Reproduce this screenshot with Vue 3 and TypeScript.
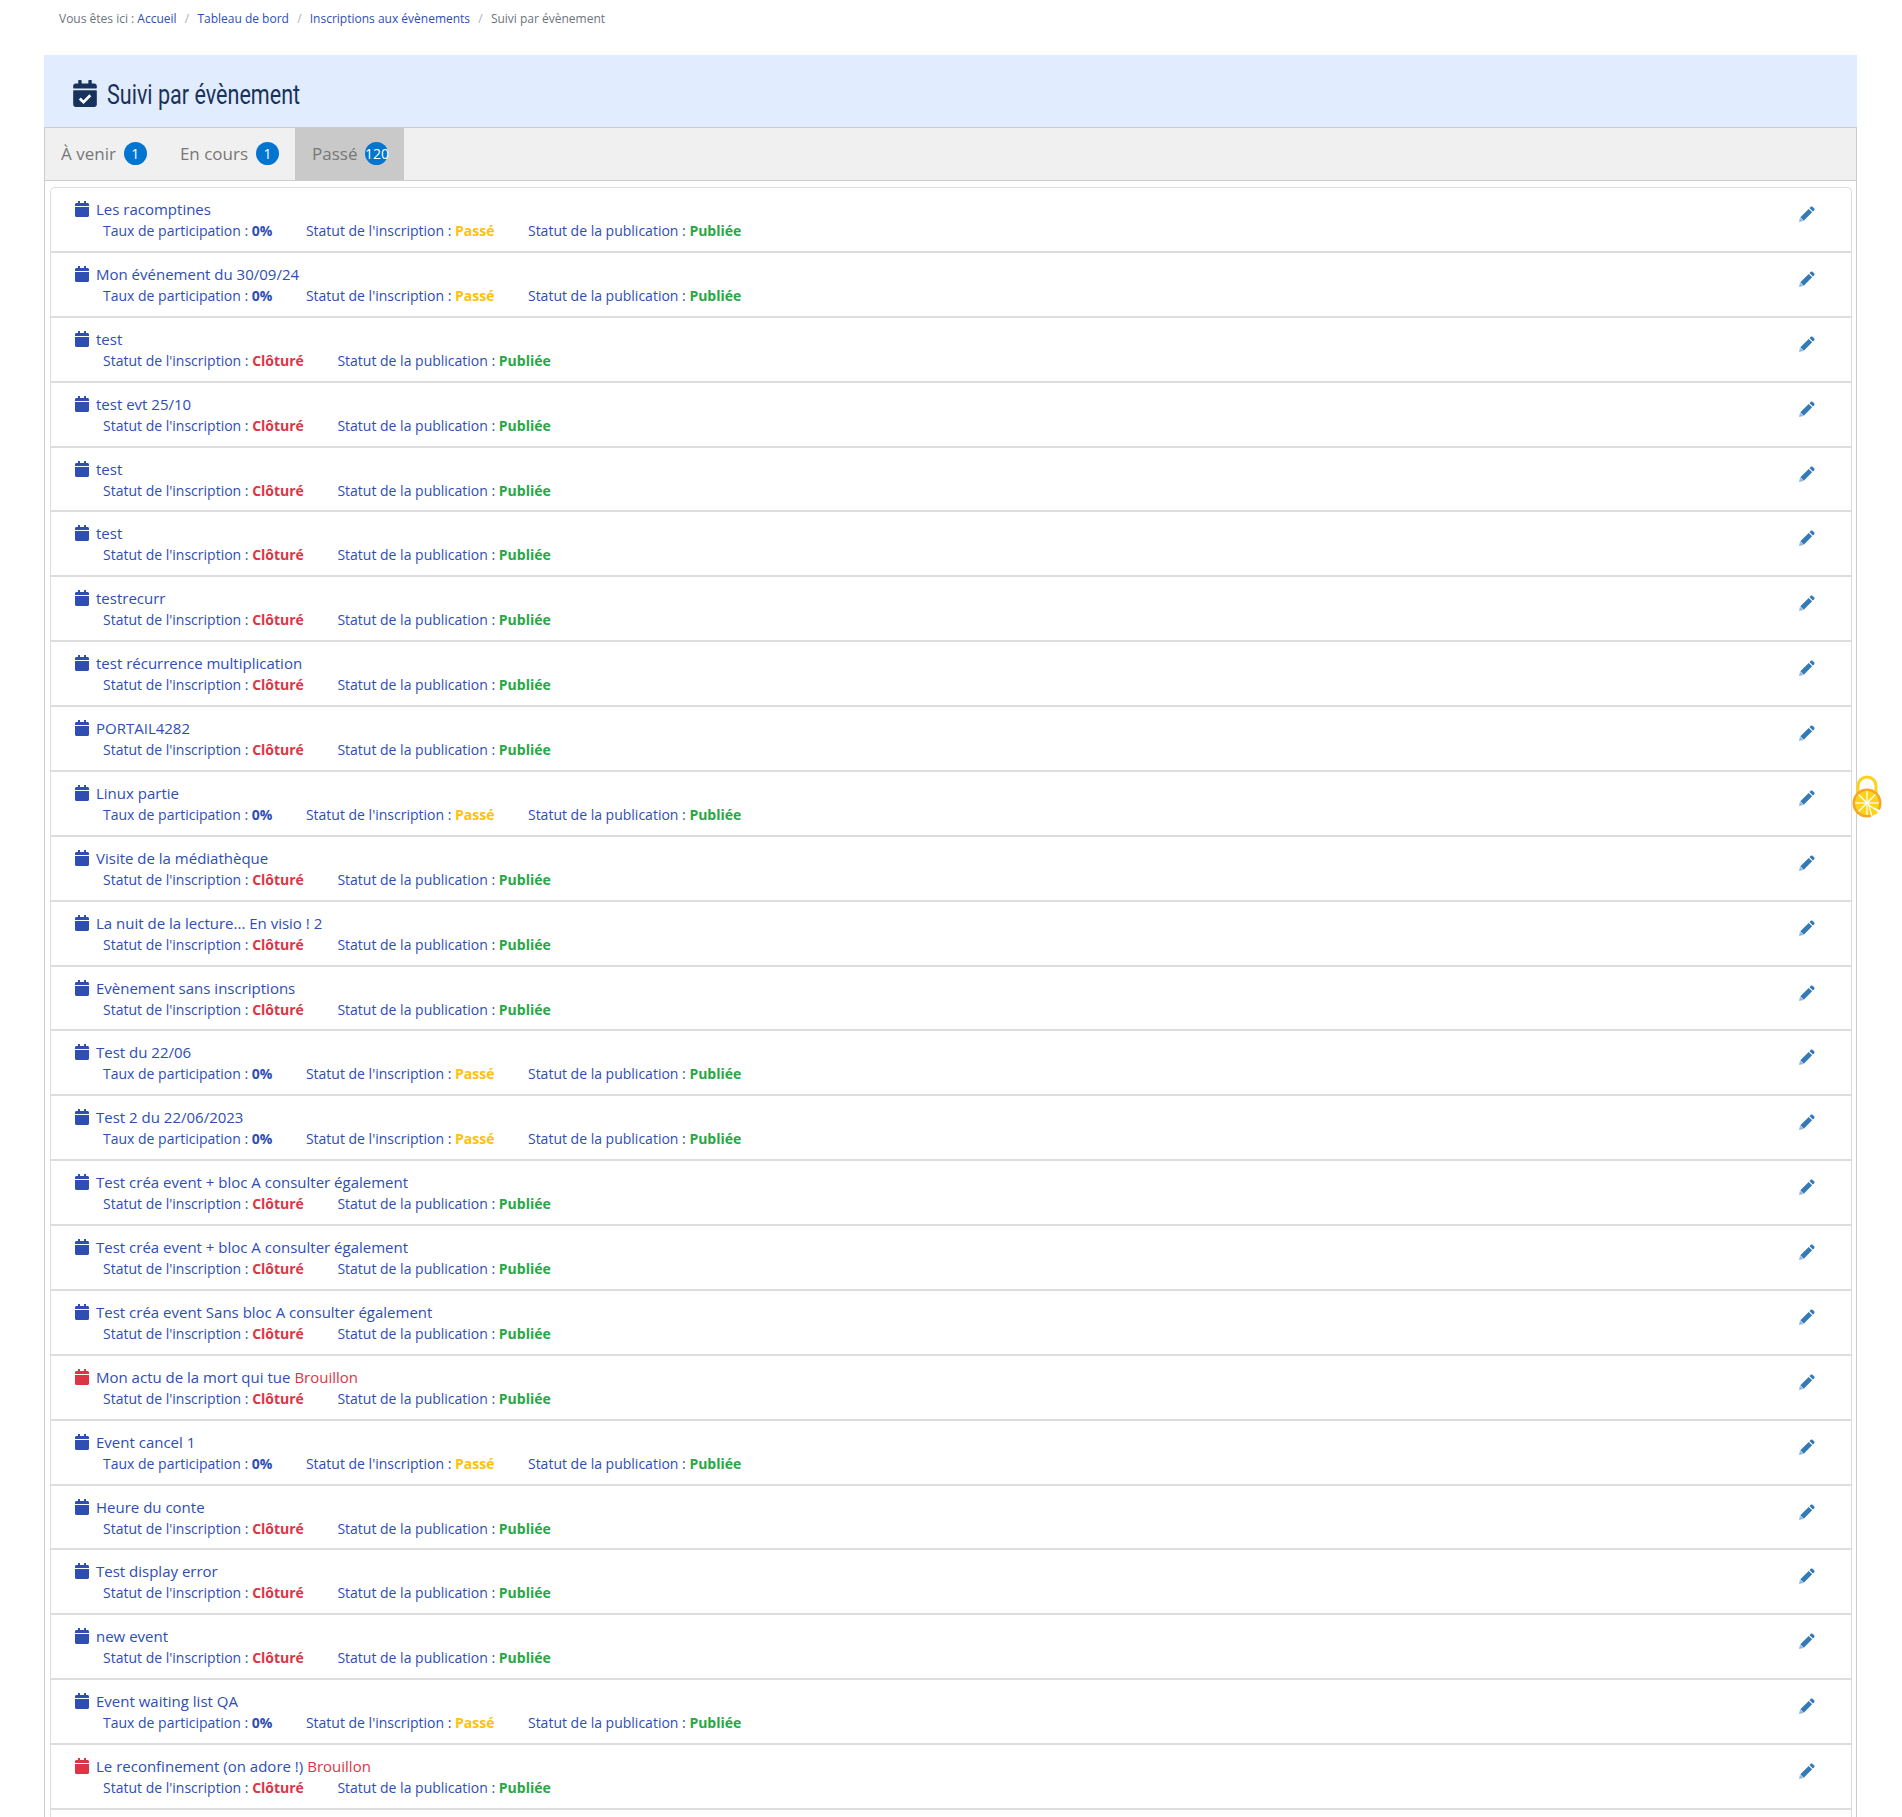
<script setup lang="ts">
interface Row { title: string; past: boolean; draft?: boolean }
const rows: Row[] = [
  { title: 'Les racomptines', past: true },
  { title: 'Mon événement du 30/09/24', past: true },
  { title: 'test', past: false },
  { title: 'test evt 25/10', past: false },
  { title: 'test', past: false },
  { title: 'test', past: false },
  { title: 'testrecurr', past: false },
  { title: 'test récurrence multiplication', past: false },
  { title: 'PORTAIL4282', past: false },
  { title: 'Linux partie', past: true },
  { title: 'Visite de la médiathèque', past: false },
  { title: 'La nuit de la lecture... En visio ! 2', past: false },
  { title: 'Evènement sans inscriptions', past: false },
  { title: 'Test du 22/06', past: true },
  { title: 'Test 2 du 22/06/2023', past: true },
  { title: 'Test créa event + bloc A consulter également', past: false },
  { title: 'Test créa event + bloc A consulter également', past: false },
  { title: 'Test créa event Sans bloc A consulter également', past: false },
  { title: 'Mon actu de la mort qui tue', past: false, draft: true },
  { title: 'Event cancel 1', past: true },
  { title: 'Heure du conte', past: false },
  { title: 'Test display error', past: false },
  { title: 'new event', past: false },
  { title: 'Event waiting list QA', past: true },
  { title: 'Le reconfinement (on adore !)', past: false, draft: true },
]
const tabs = [
  { label: 'À venir', count: 1, active: false },
  { label: 'En cours', count: 1, active: false },
  { label: 'Passé', count: 120, active: true },
]
const crumbs = ['Accueil', 'Tableau de bord', 'Inscriptions aux évènements']
const calendar = 'M12 192h424c6.6 0 12 5.4 12 12v260c0 26.5-21.5 48-48 48H48c-26.5 0-48-21.5-48-48V204c0-6.6 5.4-12 12-12zm436-44v-36c0-26.5-21.5-48-48-48h-48V12c0-6.6-5.4-12-12-12h-40c-6.6 0-12 5.4-12 12v52H160V12c0-6.6-5.4-12-12-12h-40c-6.6 0-12 5.4-12 12v52H48C21.5 64 0 85.5 0 112v36c0 6.6 5.4 12 12 12h424c6.6 0 12-5.4 12-12z'
const pencilBody = 'M372 28c18-18 47-18 65 0l47 47c18 18 18 47 0 65l-38 38-112-112zM310 92l110 110-268 268-110-110z'
const pencilTip = 'M30 372l110 110-140 30z'
const spokes = [0, 45, 90, 135]
</script>

<template>
  <div class="page">
    <nav class="crumbs">
      <span>Vous êtes ici : </span>
      <template v-for="c in crumbs" :key="c">
        <a class="crumb-link">{{ c }}</a><span class="sep">/</span>
      </template>
      <span>Suivi par évènement</span>
    </nav>

    <header class="head">
      <svg class="head-icon" viewBox="0 0 448 512">
        <path :d="calendar" fill="#17335b" />
        <polyline points="125,350 195,420 325,290" fill="none" stroke="#fff" stroke-width="52" />
      </svg>
      <h1 class="head-title">Suivi par évènement</h1>
    </header>

    <div class="tabs">
      <div v-for="t in tabs" :key="t.label" class="tab" :class="{ active: t.active }">
        <span>{{ t.label }}</span>
        <span class="badge">{{ t.count }}</span>
      </div>
    </div>

    <main class="panel">
      <ul class="list">
        <li v-for="(r, i) in rows" :key="i" class="row">
          <div class="row-body">
            <div class="row-title">
              <svg class="cal" viewBox="0 0 448 512"><path :d="calendar" :fill="r.draft ? '#dc3545' : '#2e4eb3'" /></svg>
              <a>{{ r.title }}</a>
              <span v-if="r.draft" class="draft">Brouillon</span>
            </div>
            <div class="row-meta">
              <span v-if="r.past" class="meta">Taux de participation : <b class="rate">0%</b></span>
              <span class="meta">Statut de l'inscription : <b :class="r.past ? 'past' : 'closed'">{{ r.past ? 'Passé' : 'Clôturé' }}</b></span>
              <span class="meta">Statut de la publication : <b class="pub">Publiée</b></span>
            </div>
          </div>
          <svg class="edit" viewBox="0 0 512 512">
            <path :d="pencilBody" fill="#337ab7" />
            <path :d="pencilTip" fill="#8fb6d9" />
          </svg>
        </li>
      </ul>
    </main>

    <svg class="lemon" viewBox="0 0 30 46">
      <path d="M6 20V12a9 9 0 0 1 18 0v8" fill="none" stroke="#ffd21a" stroke-width="3" />
      <circle cx="15" cy="29" r="14.5" fill="#f5a623" />
      <circle cx="15" cy="29" r="12" fill="#ffd21a" />
      <line v-for="a in spokes" :key="a" x1="3" y1="29" x2="27" y2="29" stroke="#fff" stroke-width="1.2" :transform="`rotate(${a} 15 29)`" />
      <circle cx="15" cy="29" r="1.6" fill="#fff" />
      <path d="M16.5 31L20 46L32 38Z" fill="#fff" />
      <path d="M17 31.5L20 42.5A14.5 14.5 0 0 0 27 38Z" fill="#ffd21a" stroke="#fff" stroke-width="1" />
    </svg>
  </div>
</template>

<style>
html, body { margin: 0; height: 1817px; overflow: hidden; background: #fff; }
</style>

<style scoped>
.page {
  position: relative;
  height: 1817px;
  overflow: hidden;
  box-sizing: border-box;
  padding: 0 45px 0 44px;
  font-family: "Open Sans", sans-serif;
  color: #2e4eb3;
}
.crumbs {
  height: 55px;
  box-sizing: border-box;
  padding: 10px 15px 0;
  font-size: 12px;
  line-height: 18px;
  color: #6c757d;
}
.crumb-link { color: #2e4eb3; }
.sep { padding: 0 8.2px; color: #aab0b6; }
.head {
  height: 72px;
  box-sizing: border-box;
  background: #e2ecff;
  display: flex;
  align-items: center;
  padding: 4px 0 0 29px;
  gap: 10px;
}
.head-icon { width: 24px; height: 27px; flex: none; }
.head-title {
  margin: 0;
  padding-top: 4px;
  font-family: "Roboto", sans-serif;
  font-size: 28px;
  font-weight: 400;
  color: #17335b;
  line-height: 36px;
  white-space: nowrap;
  transform: scaleX(0.77);
  transform-origin: left center;
}
.tabs {
  display: flex;
  height: 54px;
  box-sizing: border-box;
  background: #f0f0f0;
  border: 1px solid #ccc;
  font-size: 17px;
  color: #777;
}
.tab {
  display: flex;
  align-items: center;
  padding: 0 16px 2px 17px;
  gap: 8px;
}
.tab:first-child { padding-left: 16px; }
.tab.active { background: #c9c9c9; }
.badge {
  width: 23px;
  height: 23px;
  border-radius: 50%;
  background: #0275d0;
  color: #fff;
  font-size: 14px;
  line-height: 23px;
  display: flex;
  justify-content: center;
  white-space: nowrap;
}
.panel {
  height: 1700px;
  border-left: 1px solid #ccc;
  border-right: 1px solid #ccc;
  padding: 6px 4px 0 5px;
}
.list {
  list-style: none;
  margin: 0;
  padding: 0;
  height: 100%;
  border: 1px solid #ddd;
  border-bottom: 0;
  border-radius: 5px 5px 0 0;
}
.row {
  display: flex;
  justify-content: space-between;
  align-items: flex-start;
  height: 64.88px;
  box-sizing: border-box;
  border-bottom: 2px solid #ddd;
  padding: 10px 36px 0 24px;
}
.row-body { min-width: 0; }
.row-title {
  display: flex;
  align-items: center;
  font-size: 15px;
  line-height: 22px;
}
.cal { width: 14px; height: 16px; margin-right: 7px; flex: none; }
.draft { color: #dc3545; margin-left: 4px; }
.row-meta {
  display: flex;
  padding-left: 28px;
  font-size: 14px;
  line-height: 21px;
}
.meta { margin-right: 33.5px; white-space: pre-wrap; }
.rate { color: #2e4eb3; }
.past { color: #ffc107; }
.closed { color: #dc3545; }
.pub { color: #28a745; }
.edit { width: 16px; height: 16px; margin-top: 8px; flex: none; }
.lemon {
  position: absolute;
  left: 1852px;
  top: 774px;
  width: 30px;
  height: 46px;
}
</style>
